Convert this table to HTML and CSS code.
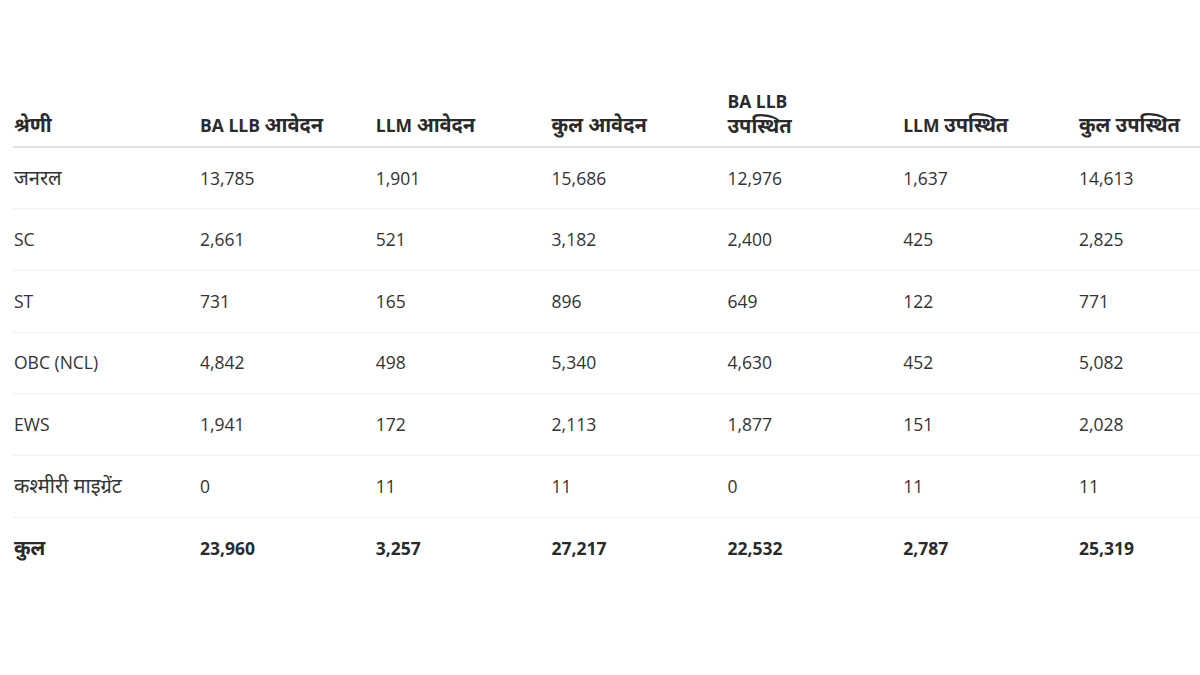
FILE: index.html
```html
<!DOCTYPE html>
<html lang="hi">
<head>
<meta charset="utf-8">
<link rel="stylesheet" href="styles.css">
</head>
<body>
<div class="wrap">
<table class="data">
  <thead>
    <tr>
      <th class="c1"><span class="dv">श्रेणी</span></th>
      <th>BA LLB <span class="dv">आवेदन</span></th>
      <th>LLM <span class="dv">आवेदन</span></th>
      <th><span class="dv">कुल आवेदन</span></th>
      <th><span class="line first">BA LLB</span><span class="line dv">उपस्थित</span></th>
      <th>LLM <span class="dv">उपस्थित</span></th>
      <th><span class="dv">कुल उपस्थित</span></th>
    </tr>
  </thead>
  <tbody>
    <tr><td><span class="dv">जनरल</span></td><td>13,785</td><td>1,901</td><td>15,686</td><td>12,976</td><td>1,637</td><td>14,613</td></tr>
    <tr><td>SC</td><td>2,661</td><td>521</td><td>3,182</td><td>2,400</td><td>425</td><td>2,825</td></tr>
    <tr><td>ST</td><td>731</td><td>165</td><td>896</td><td>649</td><td>122</td><td>771</td></tr>
    <tr><td>OBC (NCL)</td><td>4,842</td><td>498</td><td>5,340</td><td>4,630</td><td>452</td><td>5,082</td></tr>
    <tr><td>EWS</td><td>1,941</td><td>172</td><td>2,113</td><td>1,877</td><td>151</td><td>2,028</td></tr>
    <tr><td><span class="dv">कश्मीरी माइग्रेंट</span></td><td>0</td><td>11</td><td>11</td><td>0</td><td>11</td><td>11</td></tr>
    <tr class="total"><td><span class="dv">कुल</span></td><td>23,960</td><td>3,257</td><td>27,217</td><td>22,532</td><td>2,787</td><td>25,319</td></tr>
  </tbody>
</table>
</div>
</body>
</html>
```
FILE: styles.css
```css
html, body {
  margin: 0;
  padding: 0;
  background: #ffffff;
  overflow: hidden;
}
body {
  width: 1200px;
  height: 675px;
  font-family: "Open Sans", "Noto Sans", "Noto Sans Devanagari", sans-serif;
  color: #333333;
}
.wrap {
  padding: 90px 0 0 13px;
}
.data {
  border-collapse: collapse;
  table-layout: fixed;
  width: 1240px;
  font-size: 17.5px;
}
.data th, .data td {
  width: 175.8px;
  text-align: left;
  padding: 0 8px 0 1px;
  box-sizing: border-box;
}
.data th.c1 {
  width: 186px;
}
.dv {
  display: inline-block;
  font-size: 20px;
}
.line {
  display: block;
}
.line.first {
  margin-bottom: 3px;
}
.data th {
  font-weight: 700;
  vertical-align: bottom;
  height: 57px;
  padding-bottom: 10px;
  line-height: 21px;
  border-bottom: 2px solid #e2e2e2;
  color: #2a2a2a;
}
.data td {
  height: 61.7px;
  vertical-align: middle;
  border-bottom: 1px solid #f0f0f0;
  font-weight: 400;
  line-height: 21px;
}
.data tr.total td {
  font-weight: 700;
  border-bottom: none;
  color: #2a2a2a;
}
```
